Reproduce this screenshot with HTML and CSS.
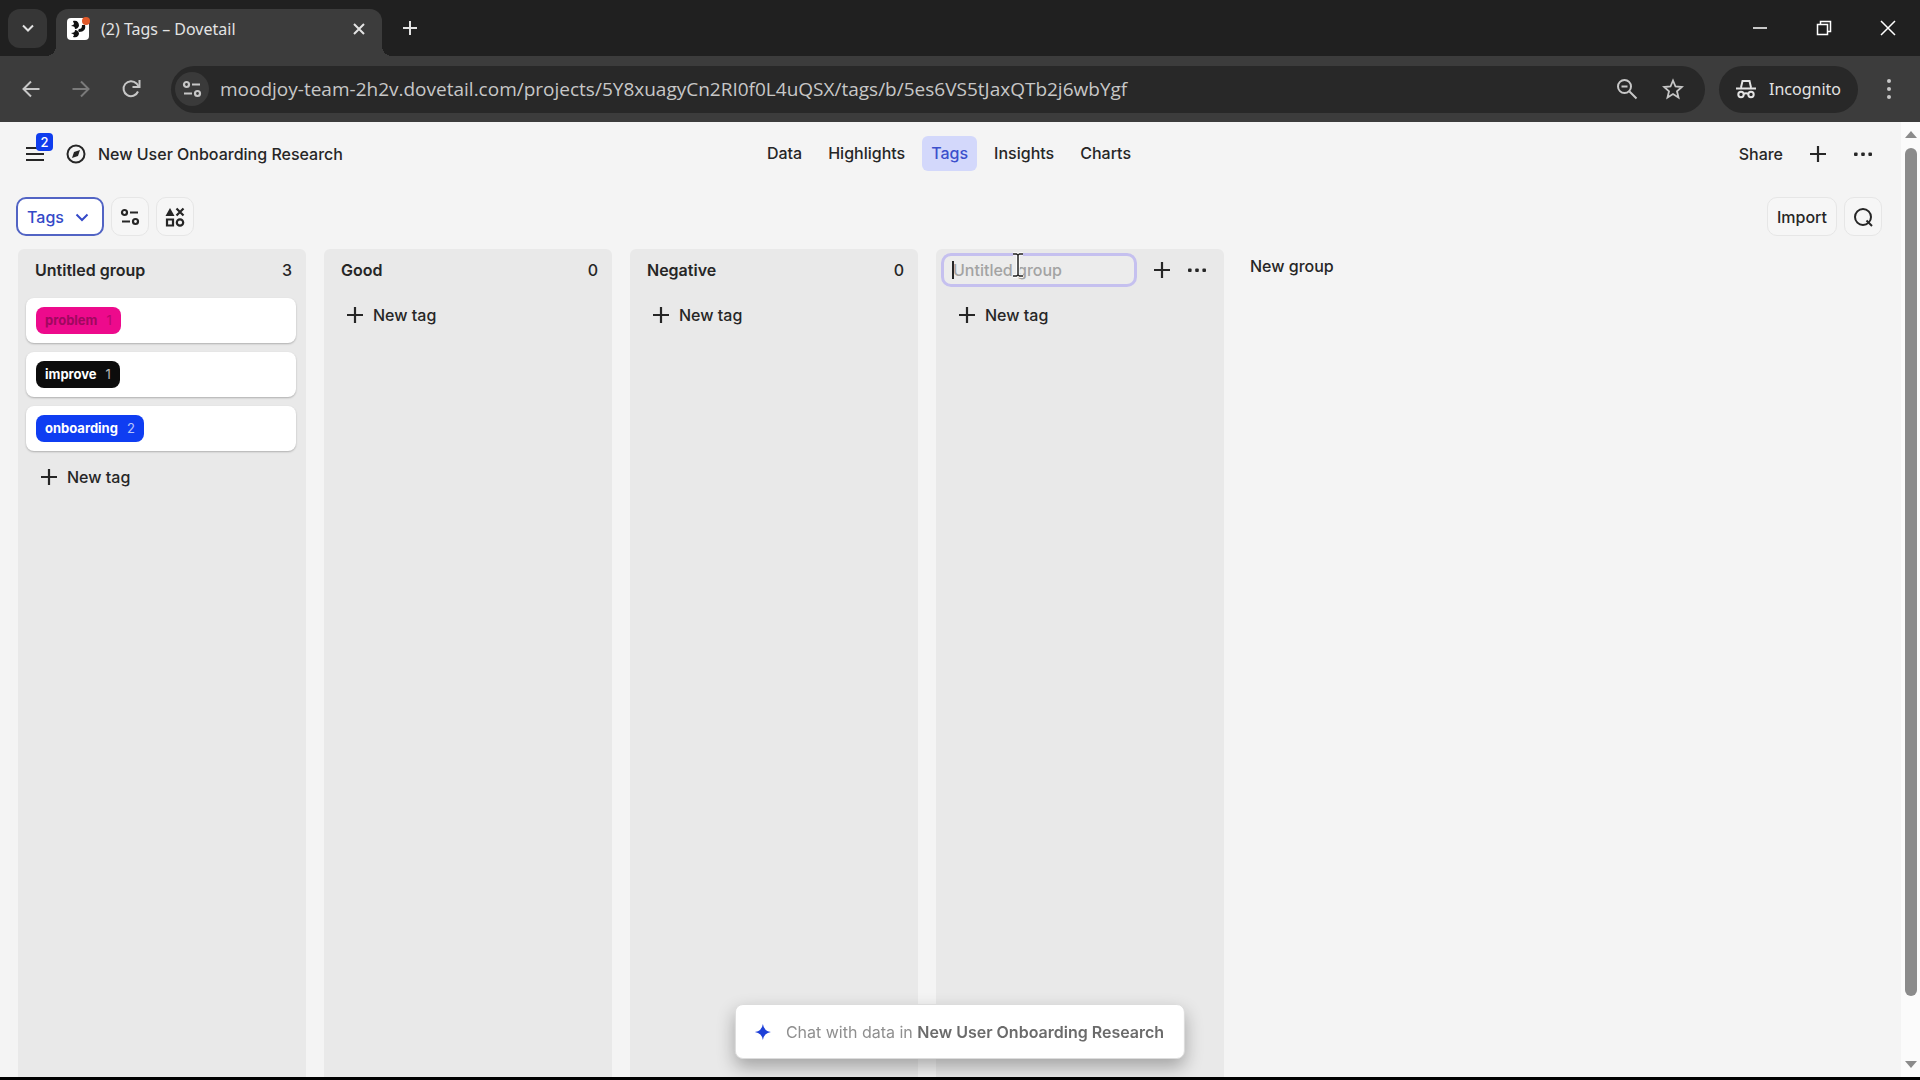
FILE: index.html
```html
<!DOCTYPE html>
<html lang="en">
<head>
    <meta charset="UTF-8">
    <meta name="viewport" content="width=device-width, initial-scale=1.0">
    <title>(2) Tags – Dovetail</title>
    <link rel="stylesheet" href="styles.css">
</head>
<body>
    <!-- shared icons -->
    <svg class="sprite" aria-hidden="true">
        <symbol id="plus" viewBox="0 0 18 18"><path d="M9 1v16M1 9h16" fill="none" stroke="currentColor" stroke-width="2.200"/></symbol>
        <symbol id="dots" viewBox="0 0 20 20"><rect x="1" y="8.4" width="3.6" height="3.6" rx="1"/><rect x="8.2" y="8.4" width="3.6" height="3.6" rx="1"/><rect x="15.4" y="8.4" width="3.6" height="3.6" rx="1"/></symbol>
        <symbol id="sliders" viewBox="0 0 20 20"><g fill="none" stroke="currentColor" stroke-width="2.200"><circle cx="4.500" cy="5.500" r="2.500"/><path d="M10 5.500h8M2 14.500h8"/><circle cx="15.500" cy="14.500" r="2.500"/></g></symbol>
    </svg>

    <div class="tab-strip">
        <button class="tab-search" aria-label="Search tabs">
            <svg width="14" height="14" viewBox="0 0 14 14"><path d="M2 4.5l5 5 5-5" fill="none" stroke="currentColor" stroke-width="2"/></svg>
        </button>
        <div class="tab">
            <svg class="favicon" width="24" height="24" viewBox="0 0 24 24">
                <rect x="1" y="1" width="22" height="22" rx="4" fill="#fff"/>
                <g fill="#111">
                    <path d="M7 4c4-1 6 1 6 5-1 2-2 3-4 3 0-2-1-3-4-3 1-1 3-1 3-2s-1-2-1-3z"/>
                    <path d="M19 8c1 4-1 7-6 7-1-1-1-2 0-3 2 0 3-1 3-4z"/>
                    <path d="M7 20c4 1 6-1 6-4-1-2-2-3-4-3 0 2-1 3-4 3 1 1 3 1 3 2s-1 1-1 2z"/>
                </g>
                <circle cx="20" cy="4" r="4" fill="#e0592a"/>
            </svg>
            <span class="tab-title">(2) Tags – Dovetail</span>
            <button class="tab-close" aria-label="Close tab">
                <svg width="14" height="14" viewBox="0 0 14 14"><path d="M2 2l10 10M12 2L2 12" stroke="currentColor" stroke-width="2"/></svg>
            </button>
        </div>
        <button class="new-tab" aria-label="New tab">
            <svg width="16" height="16" viewBox="0 0 16 16"><path d="M8 1v14M1 8h14" stroke="currentColor" stroke-width="2"/></svg>
        </button>
        <div class="window-controls">
            <button aria-label="Minimize"><svg width="16" height="16" viewBox="0 0 16 16"><path d="M1 8h14" stroke="currentColor" stroke-width="1.5"/></svg></button>
            <button aria-label="Restore"><svg width="16" height="16" viewBox="0 0 16 16"><path d="M1.5 4.5h10v10h-10zM4.500 4.500v-3h10v10h-3" fill="none" stroke="currentColor" stroke-width="1.5"/></svg></button>
            <button aria-label="Close"><svg width="16" height="16" viewBox="0 0 16 16"><path d="M1 1l14 14M15 1L1 15" stroke="currentColor" stroke-width="1.5"/></svg></button>
        </div>
    </div>

    <div class="browser-bar">
        <button class="nav-btn" aria-label="Back"><svg width="20" height="20" viewBox="0 0 20 20"><path d="M18.500 10H3M10 2.500L2.500 10l7.500 7.500" fill="none" stroke="currentColor" stroke-width="2"/></svg></button>
        <button class="nav-btn" aria-label="Forward" disabled><svg width="20" height="20" viewBox="0 0 20 20"><path d="M1.500 10H17M10 2.500l7.500 7.500-7.500 7.500" fill="none" stroke="currentColor" stroke-width="2"/></svg></button>
        <button class="nav-btn" aria-label="Reload"><svg width="20" height="20" viewBox="0 0 20 20"><path d="M17 12.500a7.500 7.500 0 1 1-1.500-8L17.500 7" fill="none" stroke="currentColor" stroke-width="2"/><path d="M18.500 1v7h-7" fill="none" stroke="currentColor" stroke-width="2"/></svg></button>
        <div class="omnibox">
            <button class="site-info" aria-label="Site information"><svg width="20" height="20"><use href="#sliders"/></svg></button>
            <input class="url" type="text" aria-label="Address" value="moodjoy-team-2h2v.dovetail.com/projects/5Y8xuagyCn2RI0f0L4uQSX/tags/b/5es6VS5tJaxQTb2j6wbYgf">
            <button class="omni-btn" aria-label="Zoom"><svg width="22" height="22" viewBox="0 0 22 22"><g fill="none" stroke="currentColor" stroke-width="2"><circle cx="8.500" cy="8.500" r="6.500"/><path d="M13.500 13.500l7 7M5.500 8.500h6"/></g></svg></button>
            <button class="omni-btn" aria-label="Bookmark"><svg width="22" height="22" viewBox="0 0 22 22"><path d="M11 2.500l2.500 6 6.300.5-4.800 4.200 1.500 6.300-5.500-3.400-5.500 3.400L7 13.200 2.200 9l6.300-.5z" fill="none" stroke="currentColor" stroke-width="1.800"/></svg></button>
        </div>
        <button class="incognito">
            <svg width="20" height="20" viewBox="0 0 20 20"><g fill="none" stroke="currentColor" stroke-width="2"><path d="M5 8.500L6.500 2h7L15 8.500M0 9.500h20"/><circle cx="5" cy="15.500" r="2.700"/><circle cx="15" cy="15.500" r="2.700"/><path d="M7.500 15q2.500-1.500 5 0"/></g></svg>
            Incognito
        </button>
        <button class="kebab" aria-label="Browser menu"><svg width="6" height="22" viewBox="0 0 6 22"><circle cx="3" cy="3" r="2"/><circle cx="3" cy="11" r="2"/><circle cx="3" cy="19" r="2"/></svg></button>
    </div>

    <div class="viewport">
        <div class="app">
            <header class="app-header">
                <div class="project">
                    <button class="menu-btn" aria-label="Menu">
                        <svg width="20" height="16" viewBox="0 0 20 16"><path d="M1 2h18M1 8h18M1 14h18" stroke="currentColor" stroke-width="2"/></svg>
                        <span class="badge">2</span>
                    </button>
                    <svg width="20" height="20" viewBox="0 0 20 20"><circle cx="10" cy="10" r="8.500" fill="none" stroke="currentColor" stroke-width="2"/><path d="M14 6l-2 6-6 2 2-6z" fill="currentColor"/></svg>
                    <span>New User Onboarding Research</span>
                </div>
                <nav class="sections">
                    <a href="#">Data</a>
                    <a href="#">Highlights</a>
                    <a href="#" class="active">Tags</a>
                    <a href="#">Insights</a>
                    <a href="#">Charts</a>
                </nav>
                <div class="header-actions">
                    <button>Share</button>
                    <button aria-label="Add"><svg width="18" height="18"><use href="#plus"/></svg></button>
                    <button aria-label="More"><svg width="20" height="20"><use href="#dots"/></svg></button>
                </div>
            </header>

            <div class="toolbar">
                <button class="btn view-btn">Tags
                    <svg width="14" height="14" viewBox="0 0 14 14"><path d="M1.500 4.500L7 10l5.500-5.500" fill="none" stroke="currentColor" stroke-width="2"/></svg>
                </button>
                <button class="btn icon-btn" aria-label="Fields"><svg width="20" height="20"><use href="#sliders"/></svg></button>
                <button class="btn icon-btn" aria-label="Group by">
                    <svg width="20" height="20" viewBox="0 0 20 20"><path d="M5 1l4.500 8h-9z" fill="currentColor"/><g fill="none" stroke="currentColor" stroke-width="2.200"><path d="M11.500 1.500l7 7M18.500 1.500l-7 7M2 12.500h6v6H2z"/><circle cx="15" cy="15.500" r="3.200"/></g></svg>
                </button>
                <button class="btn import-btn">Import</button>
                <button class="btn icon-btn" aria-label="Search">
                    <svg width="20" height="20" viewBox="0 0 20 20"><g fill="none" stroke="currentColor" stroke-width="2"><circle cx="10" cy="10" r="8"/><path d="M13.500 13.500l5.500 5.500"/></g></svg>
                </button>
            </div>

            <main class="board">
                <section class="group">
                    <div class="group-head"><h2>Untitled group</h2><span>3</span></div>
                    <div class="card"><span class="tag pink">problem <small>1</small></span></div>
                    <div class="card"><span class="tag black">improve <small>1</small></span></div>
                    <div class="card"><span class="tag blue">onboarding <small>2</small></span></div>
                    <button class="new-tag"><svg width="18" height="18"><use href="#plus"/></svg>New tag</button>
                </section>
                <section class="group">
                    <div class="group-head"><h2>Good</h2><span>0</span></div>
                    <button class="new-tag"><svg width="18" height="18"><use href="#plus"/></svg>New tag</button>
                </section>
                <section class="group">
                    <div class="group-head"><h2>Negative</h2><span>0</span></div>
                    <button class="new-tag"><svg width="18" height="18"><use href="#plus"/></svg>New tag</button>
                </section>
                <section class="group">
                    <div class="group-head editing">
                        <div class="name-field">
                            <input type="text" placeholder="Untitled group" aria-label="Group name">
                            <span class="caret"></span>
                            <svg class="pointer" width="12" height="26" viewBox="0 0 12 26"><path d="M1 2h3.500L6 3l1.500-1H11M6 3v20M1 24h3.500L6 23l1.500 1H11" fill="none" stroke="#fff" stroke-width="3.500"/><path d="M1 2h3.500L6 3l1.500-1H11M6 3v20M1 24h3.500L6 23l1.500 1H11" fill="none" stroke="#222" stroke-width="1.500"/></svg>
                        </div>
                        <button aria-label="Add tag"><svg width="18" height="18"><use href="#plus"/></svg></button>
                        <button aria-label="Group options"><svg width="20" height="20"><use href="#dots"/></svg></button>
                    </div>
                    <button class="new-tag"><svg width="18" height="18"><use href="#plus"/></svg>New tag</button>
                </section>
                <button class="new-group">New group</button>
            </main>

            <button class="chat">
                <svg width="18" height="18" viewBox="0 0 18 18"><path d="M9 1Q10 8 17 9 10 10 9 17 8 10 1 9 8 8 9 1z" fill="#1d3fd8"/></svg>
                <span>Chat with data in <b>New User Onboarding Research</b></span>
            </button>
        </div>
        <div class="scrollbar">
            <svg width="12" height="8" viewBox="0 0 12 8"><path d="M6 0l6 7H0z"/></svg>
            <div class="thumb"></div>
            <svg width="12" height="8" viewBox="0 0 12 8"><path d="M6 8l6-7H0z"/></svg>
        </div>
    </div>
</body>
</html>
```
FILE: styles.css
```css
* {
    box-sizing: border-box;
}
body {
    margin: 0;
    height: 100vh;
    display: flex;
    flex-direction: column;
    background: #000;
    padding-bottom: 3px;
    font-family: Inter, sans-serif;
    font-size: 16px;
    font-weight: 500;
    color: #262626;
    overflow: hidden;
}
button {
    display: flex;
    align-items: center;
    justify-content: center;
    padding: 0;
    border: none;
    background: none;
    font: inherit;
    color: inherit;
    cursor: pointer;
}
svg {
    flex: none;
    fill: currentColor;
}
.sprite {
    position: absolute;
    width: 0;
    height: 0;
}

/* browser window */
.tab-strip {
    display: flex;
    align-items: center;
    height: 56px;
    padding-left: 8px;
    background: #202020;
    color: #e3e3e3;
    font-family: "Noto Sans", sans-serif;
    font-weight: 400;
}
.tab-search {
    width: 39px;
    height: 39px;
    border-radius: 12px;
    background: #363636;
}
.tab {
    position: relative;
    display: flex;
    align-items: center;
    align-self: flex-end;
    width: 326px;
    height: 47px;
    margin-left: 9px;
    padding: 0 16px 8px 10px;
    border-radius: 12px 12px 0 0;
    background: #3c3c3c;
}
/* flared feet of the active tab */
.tab::before,
.tab::after {
    content: "";
    position: absolute;
    bottom: 0;
    width: 10px;
    height: 10px;
}
.tab::before {
    right: 100%;
    background: radial-gradient(circle at 0 0, transparent 10px, #3c3c3c 10px);
}
.tab::after {
    left: 100%;
    background: radial-gradient(circle at 100% 0, transparent 10px, #3c3c3c 10px);
}
.tab-title {
    flex: 1;
    margin-left: 11px;
}
.new-tab {
    margin-left: 20px;
}
.window-controls {
    display: flex;
    margin-left: auto;
}
.window-controls button {
    width: 64px;
    height: 56px;
    color: #fff;
}
.browser-bar {
    display: flex;
    align-items: center;
    height: 66px;
    padding: 0 28px 0 21px;
    background: #3c3c3c;
    color: #c7c7c7;
    font-family: "Noto Sans", sans-serif;
    font-weight: 400;
}
.nav-btn {
    width: 20px;
    margin-right: 30px;
}
.nav-btn:disabled {
    color: #7a7a7a;
}
.omnibox {
    flex: 1;
    display: flex;
    align-items: center;
    height: 47px;
    padding: 0 20px 0 4px;
    border-radius: 24px;
    background: #282828;
}
.site-info {
    width: 34px;
    height: 34px;
    border-radius: 50%;
    background: #3a3a3a;
}
.url {
    flex: 1;
    min-width: 0;
    margin-left: 11px;
    padding: 0;
    border: none;
    background: none;
    font-family: "Open Sans", sans-serif;
    font-size: 19px;
    color: #c7c7c7;
}
.omni-btn {
    width: 24px;
    margin-left: 22px;
}
.incognito {
    gap: 13px;
    height: 47px;
    margin-left: 14px;
    padding: 0 17px;
    border-radius: 24px;
    background: #282828;
    color: #e3e3e3;
}
.kebab {
    margin-left: 28px;
}

/* page */
.viewport {
    flex: 1;
    display: flex;
    min-height: 0;
    background: #f4f4f4;
}
.app {
    position: relative;
    flex: 1;
    display: flex;
    flex-direction: column;
}
.app-header {
    display: grid;
    grid-template-columns: 1fr auto 1fr;
    align-items: center;
    height: 63px;
    padding: 0 28px 0 25px;
}
.project {
    display: flex;
    align-items: center;
    gap: 12px;
}
.menu-btn {
    position: relative;
    margin-right: 9px;
}
.badge {
    position: absolute;
    left: 11px;
    bottom: 11px;
    width: 17px;
    height: 18px;
    border-radius: 4px;
    background: #0f3dee;
    color: #fff;
    font-size: 13px;
    line-height: 18px;
}
.sections {
    display: flex;
    gap: 8px;
}
.sections a {
    padding: 0 9px;
    border-radius: 6px;
    line-height: 35px;
    color: inherit;
    text-decoration: none;
}
.sections .active {
    background: #d3d8fb;
    color: #3c50cc;
}
.header-actions {
    display: flex;
    justify-content: flex-end;
    gap: 26px;
}
.toolbar {
    display: flex;
    gap: 7px;
    padding: 12px 19px 13px 16px;
}
.btn {
    height: 39px;
    border: 1px solid #e6e6e6;
    border-radius: 10px;
    background: #f6f6f6;
}
.view-btn {
    gap: 11px;
    width: 88px;
    padding-right: 4px;
    border: 2px solid #5264c4;
    background: #fff;
    color: #3449c8;
}
.icon-btn {
    width: 38px;
}
.import-btn {
    margin-left: auto;
    padding: 0 9px;
}
.board {
    flex: 1;
    display: flex;
    gap: 18px;
    padding-left: 18px;
}
.group {
    width: 288px;
    padding: 0 8px;
    border-radius: 6px 6px 0 0;
    background: #e9e9e9;
}
.group-head {
    display: flex;
    align-items: center;
    justify-content: space-between;
    height: 42px;
    margin-bottom: 7px;
    padding: 0 6px 0 9px;
}
.group-head h2 {
    margin: 0;
    font-size: 16px;
    font-weight: 600;
}
.editing {
    padding: 0 9px 0 0;
}
.name-field {
    position: relative;
    width: 196px;
    margin-left: -3px;
}
.name-field input {
    display: block;
    width: 100%;
    height: 34px;
    padding: 0 9px;
    border: 3px solid #c5c0ef;
    border-radius: 10px;
    outline: none;
    background: #ececec;
    font: inherit;
}
.name-field input::placeholder {
    color: #a3a3a3;
}
.caret {
    position: absolute;
    left: 11px;
    top: 8px;
    width: 2px;
    height: 18px;
    background: #262626;
}
.pointer {
    position: absolute;
    left: 71px;
    top: -1px;
}
.card {
    display: flex;
    align-items: center;
    width: 270px;
    height: 45px;
    margin-bottom: 9px;
    padding-left: 10px;
    border-radius: 8px;
    background: #fff;
    box-shadow: 0 1px 2px rgba(0, 0, 0, 0.25);
}
.tag {
    display: flex;
    gap: 9px;
    padding: 0 9px;
    border-radius: 8px;
    font-size: 13px;
    font-weight: 700;
    line-height: 27px;
    color: #fff;
}
.tag small {
    font-size: 13px;
    font-weight: 400;
    opacity: 0.7;
}
.pink {
    background: #ed0a8c;
    color: #a0085f;
}
.black {
    background: #0c0c0c;
}
.blue {
    background: #0f3df2;
}
.new-tag {
    gap: 9px;
    height: 34px;
    padding-left: 14px;
}
.new-group {
    align-self: flex-start;
    height: 34px;
    margin-left: 8px;
}
.chat {
    position: fixed;
    left: 50%;
    bottom: 21px;
    gap: 14px;
    height: 55px;
    padding: 0 20px 0 18px;
    border: 1px solid #dcdcdc;
    border-radius: 8px;
    background: #fff;
    box-shadow: 0 8px 18px rgba(0, 0, 0, 0.3);
    color: #8f8f8f;
    font-weight: 400;
    white-space: nowrap;
    transform: translateX(-50%);
}
.chat b {
    font-weight: 600;
    color: #6b6b6b;
}
.scrollbar {
    display: flex;
    flex-direction: column;
    align-items: center;
    width: 19px;
    padding: 9px 0;
    background: #fbfbfb;
    color: #8b8b8b;
}
.thumb {
    flex: 1;
    width: 12px;
    margin: 9px 0 64px;
    border-radius: 6px;
    background: #8b8b8b;
}
```
